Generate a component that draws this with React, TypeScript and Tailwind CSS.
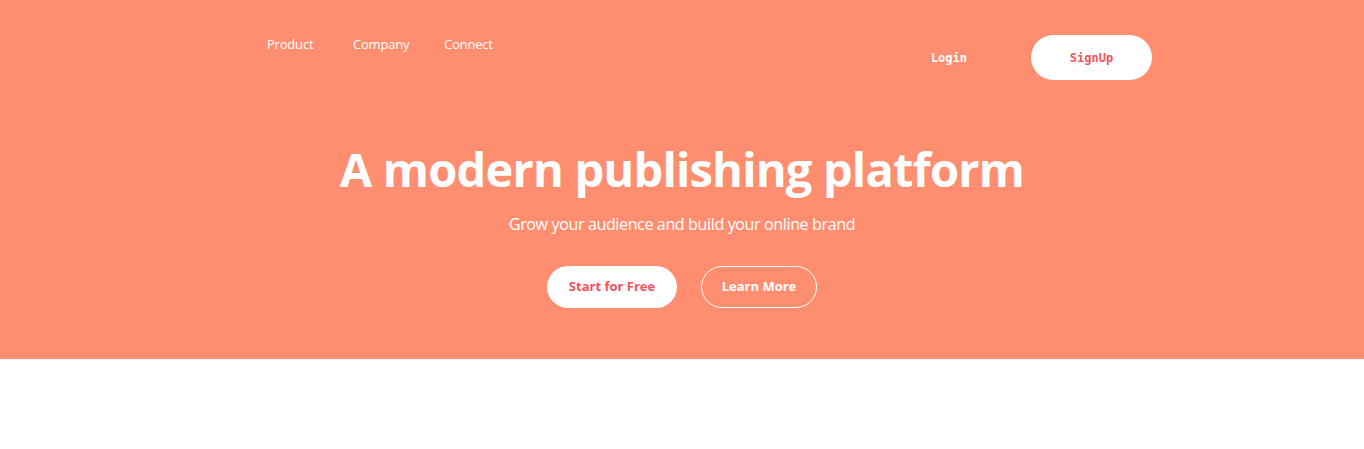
import React from "react";

export default function App() {
  return (
    <div className="min-h-[449px] w-full bg-white" style={{ fontFamily: '"Open Sans", "Noto Sans", sans-serif' }}>
      <section className="h-[359px] w-full bg-[#ff8e71] text-white">
        <nav className="mx-auto flex w-[940px] items-start justify-between pt-[35px]">
          <ul className="flex pl-[55px] text-[13px] leading-[18px] tracking-[-0.2px] text-white">
            <li className="w-[86px]">Product</li>
            <li className="w-[91px]">Company</li>
            <li>Connect</li>
          </ul>
          <div className="flex items-center">
            <button
              className="mr-[64px] text-[12px] font-bold text-white"
              style={{ fontFamily: '"DejaVu Sans Mono", monospace' }}
            >
              Login
            </button>
            <button
              className="h-[45px] w-[121px] rounded-full bg-white text-[12px] font-bold text-[#f2525e]"
              style={{ fontFamily: '"DejaVu Sans Mono", monospace' }}
            >
              SignUp
            </button>
          </div>
        </nav>
        <div className="flex flex-col items-center">
          <h1 className="mt-[61px] text-[47px] font-bold leading-[56px] tracking-[-0.8px]">
            A modern publishing platform
          </h1>
          <p className="mt-[15px] text-[16px] leading-[24px] tracking-[-0.35px] text-white">
            Grow your audience and build your online brand
          </p>
          <div className="mt-[30px] flex gap-[24px]">
            <button className="h-[42px] w-[130px] rounded-full bg-white text-[13px] font-bold text-[#f2525e]">
              Start for Free
            </button>
            <button className="h-[42px] w-[116px] rounded-full border border-white text-[13px] font-bold text-white">
              Learn More
            </button>
          </div>
        </div>
      </section>
    </div>
  );
}
